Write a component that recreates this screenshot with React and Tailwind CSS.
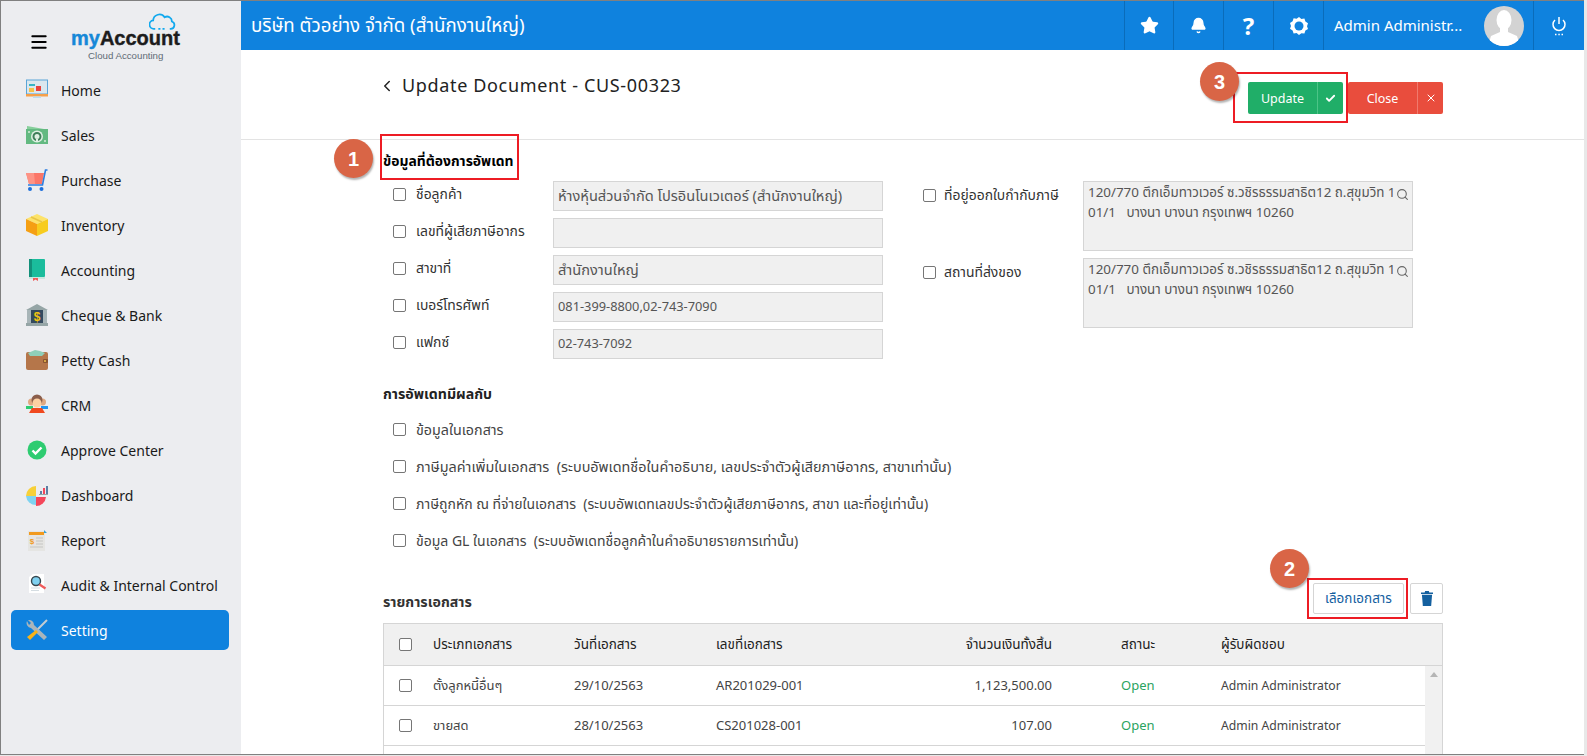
import React from 'react';
import { Star, Bell, Search, ChevronLeft, Check, X, Menu } from 'lucide-react';

const font = "font-['Tahoma','Noto_Sans','Noto_Sans_Thai','Liberation_Sans',sans-serif]";

const HomeIcon = () => (
  <svg viewBox="0 0 22 22" className="w-[22px] h-[22px]">
    <rect x="0.500" y="1" width="21" height="14" fill="#dbe7ee" stroke="#5aa5d8" />
    <rect x="3" y="5" width="6" height="2" fill="#35b5c4" />
    <rect x="3" y="9" width="5" height="4" fill="#f5c24b" />
    <rect x="10" y="7" width="5" height="5" fill="#e8413c" />
    <rect x="0" y="15" width="22" height="2.500" fill="#f5a04a" />
    <rect x="7" y="17.500" width="8" height="1.500" fill="#bcdcf0" />
  </svg>
);
const SalesIcon = () => (
  <svg viewBox="0 0 22 22" className="w-[22px] h-[22px]">
    <path d="M1 2l17 3v3H1z" fill="#86cf9b" />
    <rect x="0" y="5" width="22" height="15" fill="#63b981" />
    <circle cx="11" cy="12.500" r="6" fill="#dff0e3" />
    <circle cx="11" cy="12.500" r="3.500" fill="#dff0e3" stroke="#3f7f5a" strokeWidth="2" />
    <rect x="10" y="15" width="2" height="3" fill="#dff0e3" />
    <circle cx="3" cy="8" r="1" fill="#d5ecd9" />
    <circle cx="19" cy="17" r="1" fill="#d5ecd9" />
  </svg>
);
const CartIcon = () => (
  <svg viewBox="0 0 22 22" className="w-[22px] h-[22px]">
    <path d="M0 4h18l-2 11H3z" fill="#fb7668" />
    <path d="M0 4h8l1 11H3z" fill="#fd9385" />
    <path d="M21.500 1h-2l-3 15H2" fill="none" stroke="#2c7ee0" strokeWidth="1.600" />
    <circle cx="4" cy="20" r="2" fill="#1d6fdc" />
    <circle cx="15.500" cy="20" r="2" fill="#1d6fdc" />
  </svg>
);
const BoxIcon = () => (
  <svg viewBox="0 0 22 22" className="w-[22px] h-[22px]">
    <path d="M11 0l11 5-11 5L0 5z" fill="#fde36a" />
    <path d="M0 5l11 5v12L0 17z" fill="#f59f13" />
    <path d="M22 5l-11 5v12l11-5z" fill="#f7cc1f" />
    <path d="M5 3l11 5" stroke="#e8c548" strokeWidth="1.500" />
  </svg>
);
const BookIcon = () => (
  <svg viewBox="0 0 22 22" className="w-[22px] h-[22px]">
    <rect x="3" y="0" width="16" height="18" rx="1" fill="#1abc9c" />
    <rect x="3" y="0" width="3" height="20" fill="#12907a" />
    <rect x="3" y="18" width="16" height="2" fill="#c6e8df" />
    <path d="M7 19h5v3l-2.500-1.500L7 22z" fill="#ef5a5a" />
  </svg>
);
const BankIcon = () => (
  <svg viewBox="0 0 22 22" className="w-[22px] h-[22px]">
    <path d="M11 0l11 6H0z" fill="#95a5a6" />
    <rect x="1" y="6" width="4" height="13" fill="#a8b5b8" />
    <rect x="17" y="6" width="4" height="13" fill="#a8b5b8" />
    <rect x="5" y="6" width="12" height="13" fill="#34495e" />
    <rect x="0" y="19" width="22" height="3" fill="#95a5a6" />
    <text x="11" y="17" textAnchor="middle" fontSize="12" fontWeight="700" fill="#f1c40f" fontFamily="Liberation Sans">$</text>
  </svg>
);
const WalletIcon = () => (
  <svg viewBox="0 0 22 22" className="w-[22px] h-[22px]">
    <rect x="0" y="3" width="22" height="18" rx="2" fill="#b5764a" />
    <path d="M2 4l7-3 5 1 5 2-3 3H4z" fill="#8fcfb9" />
    <rect x="17" y="10" width="5" height="4" rx="1" fill="#8a5530" />
    <circle cx="19" cy="12" r="1" fill="#f2c14e" />
  </svg>
);
const CrmIcon = () => (
  <svg viewBox="0 0 22 22" className="w-[22px] h-[22px]">
    <rect x="0" y="12" width="7" height="3" fill="#2ecc71" />
    <rect x="15" y="12" width="7" height="3" fill="#2196f3" />
    <circle cx="5.500" cy="8" r="3.500" fill="#e0a982" />
    <circle cx="16.500" cy="8" r="3.500" fill="#e0a982" />
    <circle cx="11" cy="6" r="5.500" fill="#8b5e4b" />
    <circle cx="11" cy="9" r="4.500" fill="#fdd0a2" />
    <path d="M3 19l3-5h10l3 5z" fill="#f0491f" />
  </svg>
);
const ApproveIcon = () => (
  <svg viewBox="0 0 22 22" className="w-[22px] h-[22px]">
    <circle cx="11" cy="11" r="9.500" fill="#2ecc71" />
    <path d="M6.500 11.500l3 3 6-6" fill="none" stroke="#fff" strokeWidth="2.400" />
  </svg>
);
const DashIcon = () => (
  <svg viewBox="0 0 22 22" className="w-[22px] h-[22px]">
    <path d="M10 2a10 10 0 0 0-10 10h10z" fill="#f7d038" />
    <path d="M0 12a10 10 0 0 0 10 9v-9z" fill="#7fd3f0" />
    <path d="M10 13h10a10 10 0 0 1-10 9z" fill="#f4465a" />
    <rect x="14" y="7" width="2" height="3" fill="#5d7fa3" />
    <rect x="17" y="4" width="2" height="6" fill="#f4465a" />
    <rect x="20" y="2" width="2" height="8" fill="#5d7fa3" />
    <rect x="13" y="10" width="9" height="1" fill="#95a5a6" />
  </svg>
);
const ReportIcon = () => (
  <svg viewBox="0 0 22 22" className="w-[22px] h-[22px]">
    <rect x="2" y="2" width="17" height="20" fill="#e5e5e3" />
    <rect x="3" y="3" width="15" height="3" fill="#f19a1f" />
    <path d="M18 1l3 3h-3z" fill="#3aa1d8" />
    <text x="6" y="15" textAnchor="middle" fontSize="8" fontWeight="700" fill="#f19a1f" fontFamily="Liberation Sans">$</text>
    <path d="M10 9h7M10 12h7M10 15h7M4 18h13" stroke="#c5c5c3" />
  </svg>
);
const AuditIcon = () => (
  <svg viewBox="0 0 22 22" className="w-[22px] h-[22px]">
    <path d="M3 3l4-3h11v19H3z" fill="#fff" />
    <path d="M5 14h9M5 16.500h8" stroke="#d5dde2" />
    <circle cx="10" cy="7" r="4.500" fill="#7fd0f0" stroke="#37474f" strokeWidth="1.400" />
    <path d="M13.500 10.500l6 4" stroke="#ef5a5a" strokeWidth="2.200" />
  </svg>
);
const ToolsIcon = () => (
  <svg viewBox="0 0 22 22" className="w-[22px] h-[22px]">
    <path d="M21 1L10 12" stroke="#c3ccd1" strokeWidth="2" />
    <path d="M1 2a5 5 0 0 0 4 7l13 12 3-3L8 6a5 5 0 0 0-6-5l3 3-2 2z" fill="#a9b5bb" />
    <path d="M10 11L1 18l3 3 8-8z" fill="#f7b217" />
  </svg>
);

const navItems = [
  { label: 'Home', icon: HomeIcon },
  { label: 'Sales', icon: SalesIcon },
  { label: 'Purchase', icon: CartIcon },
  { label: 'Inventory', icon: BoxIcon },
  { label: 'Accounting', icon: BookIcon },
  { label: 'Cheque & Bank', icon: BankIcon },
  { label: 'Petty Cash', icon: WalletIcon },
  { label: 'CRM', icon: CrmIcon },
  { label: 'Approve Center', icon: ApproveIcon },
  { label: 'Dashboard', icon: DashIcon },
  { label: 'Report', icon: ReportIcon },
  { label: 'Audit & Internal Control', icon: AuditIcon },
  { label: 'Setting', icon: ToolsIcon, active: true },
];

const Box = () => (
  <span className="block w-[13px] h-[13px] shrink-0 rounded-[2px] border border-[#767676] bg-white" />
);

const Badge = ({ n, className }) => (
  <div className={`absolute w-[39px] h-[39px] rounded-full bg-[#d96546] text-white text-[20px] font-bold font-['Liberation_Sans',sans-serif] flex items-center justify-center shadow-[1px_2px_2px_rgba(0,0,0,0.3)] z-10 ${className}`}>
    {n}
  </div>
);

const Sidebar = () => (
  <aside className="w-[240px] shrink-0 bg-[#ecedf0]">
    <div className="h-[67px] relative">
      <Menu className="absolute left-[28px] top-[31px] w-[20px] h-[20px] text-black" strokeWidth={2.4} />
      <svg viewBox="0 0 26 18" className="absolute left-[148px] top-[11px] w-[27px] h-[19px]">
        <path d="M6 16h-1a4 4 0 0 1-1-8 6 6 0 0 1 11-3 4.500 4.500 0 0 1 7 4 3.600 3.600 0 0 1-1 7h-1" fill="none" stroke="#12a9ee" strokeWidth="1.700" />
        <path d="M9 16h8" stroke="#12a9ee" strokeWidth="1.700" strokeDasharray="2 2" />
      </svg>
      <div className="absolute left-[70px] top-[24px] text-[20px] leading-[26px] font-bold font-['Liberation_Sans',sans-serif] [-webkit-text-stroke:0.4px]">
        <span className="text-[#1688d8]">my</span><span className="text-[#1c1c1c]">Account</span>
      </div>
      <div className="absolute left-[87px] top-[49px] text-[9.7px] leading-[12px] text-[#5f6b75] font-['Liberation_Sans',sans-serif]">Cloud Accounting</div>
    </div>
    <nav className="pl-[10px] pr-[12px] mt-[2px]">
      {navItems.map((item) => (
        <div
          key={item.label}
          className={`h-[40px] mb-[5px] flex items-center pl-[15px] rounded-[5px] text-[14px] ${item.active ? 'bg-[#0f82de] text-white' : 'text-[#1a1a1a]'}`}
        >
          <item.icon />
          <span className="ml-[13px]">{item.label}</span>
        </div>
      ))}
    </nav>
  </aside>
);

const TopCell = ({ children, className = '' }) => (
  <div className={`h-full flex items-center justify-center border-l border-[#0a6cba] ${className}`}>{children}</div>
);

const Topbar = () => (
  <header className="h-[49px] bg-[#0f82de] text-white flex items-center">
    <div className="flex-1 pl-[10px] text-[18.7px] pb-[1px]">บริษัท ตัวอย่าง จำกัด (สำนักงานใหญ่)</div>
    <TopCell className="w-[49px]"><Star className="w-[19px] h-[19px] fill-white" /></TopCell>
    <TopCell className="w-[50px]"><Bell className="w-[17px] h-[17px] fill-white" /></TopCell>
    <TopCell className="w-[50px]"><span className="text-[24px] font-bold">?</span></TopCell>
    <TopCell className="w-[50px]">
      <svg viewBox="0 0 20 20" className="w-[20px] h-[20px]">
        <path d="M10 1l2.400 2 3-.4 1 3 2.600 1.700-1 3 1 2.700-2.600 1.600-1 3-3-.4L10 19l-2.400-2-3 .4-1-3L1 12.700l1-2.700-1-3 2.600-1.700 1-3 3 .4z" fill="#fff" />
        <circle cx="10" cy="10" r="4.500" fill="#0f82de" />
      </svg>
    </TopCell>
    <TopCell className="w-[210px] justify-start pl-[10px] pr-[9px]">
      <span className="text-[15px] flex-1 whitespace-nowrap">Admin Administr...</span>
      <div className="w-[40px] h-[40px] rounded-full bg-[#d3d3d3] overflow-hidden shrink-0">
        <svg viewBox="0 0 40 40" className="w-[40px] h-[40px]">
          <ellipse cx="20" cy="14" rx="7.500" ry="10" fill="#fff" />
          <path d="M16 22h8v4l9 4 3 10H4l3-10 9-4z" fill="#fff" />
        </svg>
      </div>
    </TopCell>
    <TopCell className="w-[51px]">
      <svg viewBox="0 0 16 20" className="w-[16px] h-[20px]" fill="none" stroke="#fff" strokeWidth="1.500">
        <path d="M8 1v7M4 4a6 6 0 1 0 8 0" />
        <path d="M4 18.500h1.500M7.300 18.500h1.500M10.500 18.500h1.500" />
      </svg>
    </TopCell>
  </header>
);

const fields = [
  { label: 'ชื่อลูกค้า', value: 'ห้างหุ้นส่วนจำกัด โปรอินโนเวเตอร์ (สำนักงานใหญ่)', size: 'text-[14.6px]' },
  { label: 'เลขที่ผู้เสียภาษีอากร', value: '', size: 'text-[13px]' },
  { label: 'สาขาที่', value: 'สำนักงานใหญ่', size: 'text-[14.6px]' },
  { label: 'เบอร์โทรศัพท์', value: '081-399-8800,02-743-7090', size: 'text-[12.8px]' },
  { label: 'แฟกซ์', value: '02-743-7092', size: 'text-[12.8px]' },
];

const effects = [
  { text: 'ข้อมูลในเอกสาร', size: 'text-[14.3px]' },
  { text: 'ภาษีมูลค่าเพิ่มในเอกสาร\u00a0\u00a0(ระบบอัพเดทชื่อในคำอธิบาย, เลขประจำตัวผู้เสียภาษีอากร, สาขาเท่านั้น)', size: 'text-[14.4px]' },
  { text: 'ภาษีถูกหัก ณ ที่จ่ายในเอกสาร\u00a0\u00a0(ระบบอัพเดทเลขประจำตัวผู้เสียภาษีอากร, สาขา และที่อยู่เท่านั้น)', size: 'text-[14px]' },
  { text: 'ข้อมูล GL ในเอกสาร\u00a0\u00a0(ระบบอัพเดทชื่อลูกค้าในคำอธิบายรายการเท่านั้น)', size: 'text-[14px]' },
];

const address = '120/770 ตึกเอ็มทาวเวอร์ ซ.วชิรธรรมสาธิต12 ถ.สุขุมวิท 101/1\u00a0\u00a0 บางนา บางนา กรุงเทพฯ 10260';

const rows = [
  { type: 'ตั้งลูกหนี้อื่นๆ', date: '29/10/2563', no: 'AR201029-001', amount: '1,123,500.00' },
  { type: 'ขายสด', date: '28/10/2563', no: 'CS201028-001', amount: '107.00' },
];

const Cols = ({ a, b, c, d, e, f }) => (
  <>
    <div className="w-[49px] pl-[15px]"><Box /></div>
    <div className="w-[141px]">{a}</div>
    <div className="w-[142px]">{b}</div>
    <div className="w-[200px]">{c}</div>
    <div className="w-[136px] text-right">{d}</div>
    <div className="w-[100px] ml-[69px]">{e}</div>
    <div className="w-[200px]">{f}</div>
  </>
);

export default function App() {
  return (
    <div className={`h-[756px] w-[1587px] overflow-hidden bg-[#e8e8e8] ${font}`}>
      <div className="h-[755px] w-[1584px] flex border-t border-l border-b border-[#808080] overflow-hidden bg-white">
        <Sidebar />
        <main className="flex-1 min-w-0">
          <Topbar />
          <div className="h-[90px] border-b border-[#e3e3e3] relative">
            <div className="absolute left-[137px] top-[22px] flex items-center text-[#222]">
              <ChevronLeft className="w-[18px] h-[18px]" />
              <span className="ml-[6px] text-[18px] tracking-[0.65px]">Update Document - CUS-00323</span>
            </div>
            <div className="absolute left-[1007px] top-[32px] flex gap-[5px] text-white text-[12.5px]">
              <div className="w-[95px] h-[32px] bg-[#20ae68] rounded-[2px] flex">
                <span className="w-[69px] flex items-center justify-center pt-[2px]">Update</span>
                <span className="flex-1 border-l border-[#4cc487] flex items-center justify-center"><Check className="w-[11px] h-[11px]" strokeWidth={4} /></span>
              </div>
              <div className="w-[95px] h-[32px] bg-[#e94d3d] rounded-[2px] flex">
                <span className="w-[69px] flex items-center justify-center pt-[2px]">Close</span>
                <span className="flex-1 border-l border-[#f07a6d] flex items-center justify-center"><X className="w-[12px] h-[12px]" strokeWidth={2} /></span>
              </div>
            </div>
            <div className="absolute left-[992px] top-[22px] w-[115px] h-[51px] border-2 border-[#ed1c24]" />
            <Badge n="3" className="left-[959px] top-[12px]" />
          </div>

          <div className="ml-[142px] w-[1060px] relative">
            <div className="absolute left-[-3px] top-[-6px] w-[139px] h-[46px] border-2 border-[#ed1c24]" />
            <Badge n="1" className="left-[-49px] top-[-1px]" />
            <h2 className="pt-[11px] h-[41px] text-[13.9px] font-bold text-black">ข้อมูลที่ต้องการอัพเดท</h2>

            <div className="flex">
              <div className="w-[500px] flex flex-col gap-[7px]">
                {fields.map((f) => (
                  <div key={f.label} className="flex h-[30px]">
                    <div className="pl-[10px] w-[170px] flex items-center gap-[10px] text-[13.9px] text-[#333] pb-[3px]">
                      <Box /><span>{f.label}</span>
                    </div>
                    <div className={`w-[330px] bg-[#f0f0f0] border border-[#d5d5d5] px-[4px] flex items-center text-[#555] ${f.size}`}>{f.value}</div>
                  </div>
                ))}
              </div>
              <div className="ml-[40px] flex flex-col gap-[7px]">
                {['ที่อยู่ออกใบกำกับภาษี', 'สถานที่ส่งของ'].map((label) => (
                  <div key={label} className="flex h-[70px]">
                    <div className="w-[160px] flex items-start gap-[8px] text-[13.9px] text-[#333] pt-[8px]">
                      <Box /><span className="-mt-[4px]">{label}</span>
                    </div>
                    <div className="w-[330px] bg-[#f0f0f0] border border-[#d5d5d5] pl-[4px] pr-[13px] text-[13.4px] leading-[20px] text-[#555] relative break-all">
                      {address}
                      <Search className="absolute right-[3px] top-[6px] w-[13px] h-[13px] text-[#666]" />
                    </div>
                  </div>
                ))}
              </div>
            </div>

            <h3 className="mt-[24px] h-[19px] text-[14.2px] font-bold text-[#222]">การอัพเดทมีผลกับ</h3>
            <div className="mt-[9px] flex flex-col pl-[10px]">
              {effects.map((t) => (
                <div key={t.text} className={`h-[37px] flex items-center gap-[10px] text-[#444] ${t.size}`}>
                  <Box /><span>{t.text}</span>
                </div>
              ))}
            </div>

            <div className="mt-[18px] h-[40px] flex items-center justify-between relative">
              <span className="text-[14.2px] font-bold text-[#333] pt-[10px]">รายการเอกสาร</span>
              <div className="flex gap-[6px] mt-[2px]">
                <div className="w-[91px] h-[31px] border border-[#d5d5d5] rounded-[2px] flex items-center justify-center text-[13.5px] text-[#14609f]">เลือกเอกสาร</div>
                <div className="w-[33px] h-[31px] border border-[#d5d5d5] rounded-[2px] flex items-center justify-center">
                  <svg viewBox="0 0 13 16" className="w-[12px] h-[15px]" fill="#14609f">
                    <path d="M4.500 0h4l.5 1.500h4V3H0V1.500h4z" />
                    <path d="M1 4h11l-1 12H2z" />
                  </svg>
                </div>
              </div>
              <div className="absolute right-[35px] top-[1px] w-[101px] h-[41px] border-2 border-[#ed1c24]" />
              <Badge n="2" className="right-[134px] top-[-28px]" />
            </div>

            <div className="mt-[6px] border-l border-r border-t border-[#d5d5d5] relative">
              <div className="h-[42px] bg-[#f0f0f0] flex items-center border-b border-[#d5d5d5] text-[13.5px] text-[#222]">
                <Cols a="ประเภทเอกสาร" b="วันที่เอกสาร" c="เลขที่เอกสาร" d="จำนวนเงินทั้งสิ้น" e="สถานะ" f="ผู้รับผิดชอบ" />
              </div>
              <div className="pr-[17px]">
                {rows.map((r) => (
                  <div key={r.no} className="h-[40px] flex items-center border-b border-[#d5d5d5] text-[13px] text-[#444]">
                    <Cols a={r.type} b={r.date} c={r.no} d={r.amount} e={<span className="text-[#2aa35f]">Open</span>} f={<span className="text-[12.2px]">Admin Administrator</span>} />
                  </div>
                ))}
                <div className="h-[40px]" />
              </div>
              <div className="absolute right-0 top-[42px] bottom-0 w-[17px] bg-[#f1f1f1] flex justify-center pt-[6px]">
                <span className="w-0 h-0 border-x-[4px] border-x-transparent border-b-[5px] border-b-[#b5b5b5]" />
              </div>
            </div>
          </div>
        </main>
      </div>
    </div>
  );
}
